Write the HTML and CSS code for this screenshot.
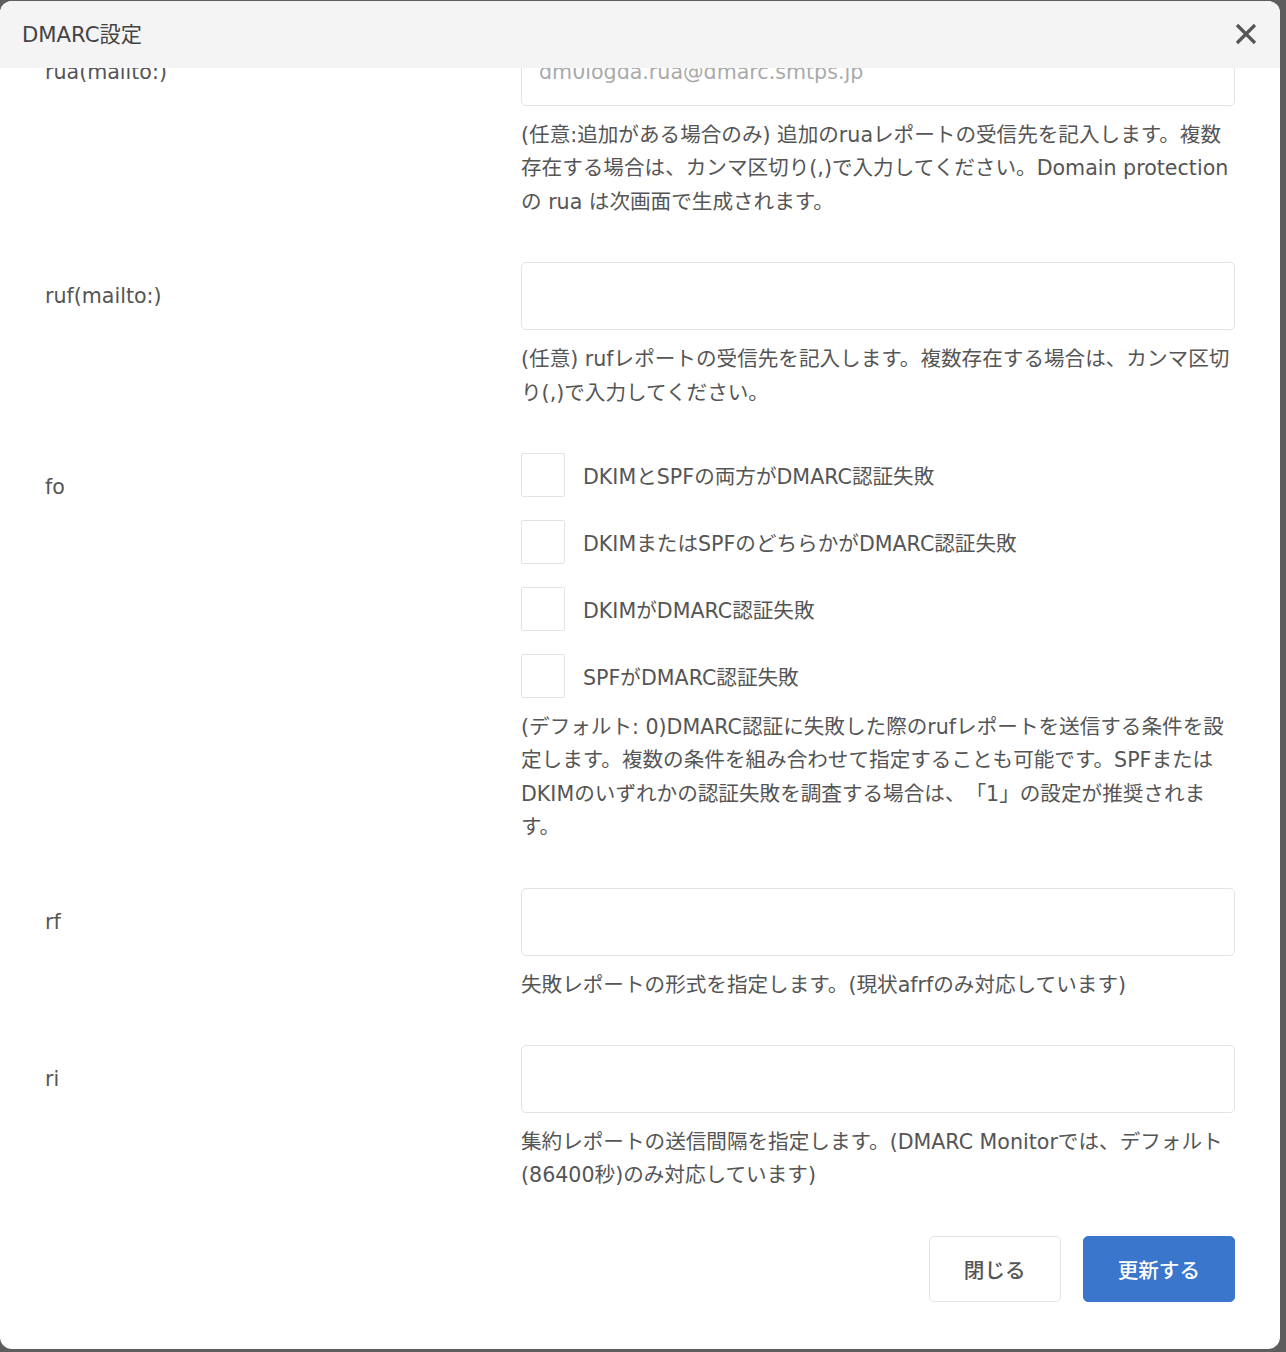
FILE: index.html
```html
<!DOCTYPE html>
<html lang="ja">
<head>
<meta charset="utf-8">
<title>DMARC設定</title>
<link rel="stylesheet" href="styles.css">
</head>
<body>
<div class="modal">
  <div class="modal-header">
    <h2 class="modal-title">DMARC設定</h2>
    <button class="close" type="button" aria-label="close">
      <svg width="22" height="22" viewBox="0 0 22 22"><path d="M2 2 L20 20 M20 2 L2 20" stroke="#555" stroke-width="3.2" fill="none"/></svg>
    </button>
  </div>
  <div class="modal-body">
    <div class="form">
      <div class="row">
        <div class="label">rua(mailto:)</div>
        <div class="field">
          <input class="input" type="text" placeholder="dm0logda.rua@dmarc.smtps.jp">
          <p class="help">(任意:追加がある場合のみ) 追加のruaレポートの受信先を記入します。複数存在する場合は、カンマ区切り(,)で入力してください。Domain protection の rua は次画面で生成されます。</p>
        </div>
      </div>
      <div class="row">
        <div class="label">ruf(mailto:)</div>
        <div class="field">
          <input class="input" type="text">
          <p class="help">(任意) rufレポートの受信先を記入します。複数存在する場合は、カンマ区切り(,)で入力してください。</p>
        </div>
      </div>
      <div class="row">
        <div class="label">fo</div>
        <div class="field">
          <div class="checks">
            <label class="check"><span class="box"></span>DKIMとSPFの両方がDMARC認証失敗</label>
            <label class="check"><span class="box"></span>DKIMまたはSPFのどちらかがDMARC認証失敗</label>
            <label class="check"><span class="box"></span>DKIMがDMARC認証失敗</label>
            <label class="check"><span class="box"></span>SPFがDMARC認証失敗</label>
          </div>
          <p class="help">(デフォルト: 0)DMARC認証に失敗した際のrufレポートを送信する条件を設定します。複数の条件を組み合わせて指定することも可能です。SPFまたはDKIMのいずれかの認証失敗を調査する場合は、「1」の設定が推奨されます。</p>
        </div>
      </div>
      <div class="row">
        <div class="label">rf</div>
        <div class="field">
          <input class="input" type="text">
          <p class="help">失敗レポートの形式を指定します。(現状afrfのみ対応しています)</p>
        </div>
      </div>
      <div class="row">
        <div class="label">ri</div>
        <div class="field">
          <input class="input" type="text">
          <p class="help">集約レポートの送信間隔を指定します。(DMARC Monitorでは、デフォルト(86400秒)のみ対応しています)</p>
        </div>
      </div>
      <div class="footer">
        <button class="btn btn-default" type="button">閉じる</button>
        <button class="btn btn-primary" type="button">更新する</button>
      </div>
    </div>
  </div>
</div>
</body>
</html>
```

FILE: styles.css
```css
html, body {
  margin: 0;
  padding: 0;
}

body {
  background: #5d5d5d;
  font-family: "DejaVu Sans", "Noto Sans CJK JP", sans-serif;
  font-size: 20.6px;
  color: #555;
  height: 1352px;
  overflow: hidden;
  text-spacing-trim: space-all;
}

.modal {
  width: 1280px;
  height: 1348px;
  margin-top: 1px;
  background: #fff;
  border-radius: 12px;
  overflow: hidden;
  display: flex;
  flex-direction: column;
}

.modal-header {
  flex: none;
  box-sizing: border-box;
  height: 67px;
  background: #f4f4f4;
  display: flex;
  align-items: center;
  justify-content: space-between;
  padding: 0 23px 2px 22px;
  position: relative;
  z-index: 1;
}

.modal-title {
  margin: 0 0 2px;
  font-size: 21.2px;
  font-weight: normal;
  color: #444;
}

.close {
  border: 0;
  padding: 0;
  background: none;
  width: 22px;
  height: 22px;
  display: block;
}

.close svg {
  display: block;
}

.modal-body {
  flex: 1;
  overflow: hidden;
}

.form {
  margin-top: -30px;
  padding: 0 45px;
}

.row {
  display: grid;
  grid-template-columns: 2fr 3fr;
  margin-bottom: 43px;
}

.label {
  height: 68px;
  display: flex;
  align-items: center;
  color: #555;
}

.input {
  display: block;
  box-sizing: border-box;
  width: 100%;
  height: 68px;
  margin: 0;
  border: 1px solid #e3e3e3;
  border-radius: 5px;
  padding: 0 17px;
  font: inherit;
  color: #555;
  background: #fff;
}

.input::placeholder {
  color: #aaa;
}

.help {
  margin: 13px 0 0;
  line-height: 33.4px;
  color: #555;
}

.checks {
  display: flex;
  flex-direction: column;
  gap: 23px;
}

.check {
  display: flex;
  align-items: center;
  gap: 18px;
  height: 44px;
}

.box {
  flex: none;
  width: 44px;
  height: 44px;
  box-sizing: border-box;
  border: 1px solid #e3e3e3;
  border-radius: 2px;
  background: #fff;
}

.footer {
  display: flex;
  justify-content: flex-end;
  gap: 22px;
}

.btn {
  height: 66px;
  padding: 0 34px;
  border-radius: 5px;
  font: inherit;
  font-weight: 500;
}

.btn-default {
  background: #fff;
  border: 1px solid #e3e3e3;
  color: #555;
}

.btn-primary {
  background: #3a76cc;
  border: 1px solid #3a76cc;
  color: #fff;
}
```
